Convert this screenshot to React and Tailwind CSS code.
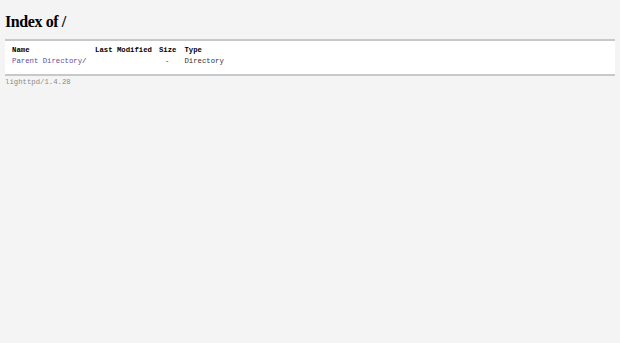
export default function App() {
  const mono = { fontFamily: '"Liberation Mono", "DejaVu Sans Mono", monospace' };
  return (
    <div className="min-h-[343px] w-full bg-[#f4f4f4] px-[5px] pt-[11px]">
      <h1 className="text-[16px] font-bold leading-[22px] tracking-[-0.4px] text-black [font-family:'Liberation_Serif',serif]">
        Index of /
      </h1>
      <div className="mt-[6px] border-t-2 border-b-2 border-[#c8c8c8] bg-white px-[6px] pt-[4px] pb-[2px] font-['Liberation_Mono',monospace] text-[7.3px] leading-[11px]">
        <table className="border-separate border-spacing-x-[1px]">
          <thead>
            <tr className="font-bold text-black">
              <td className="w-[82px]">Name</td>
              <td className="pr-[6px]">Last Modified</td>
              <td className="pr-[7px]">Size</td>
              <td>Type</td>
            </tr>
          </thead>
          <tbody>
            <tr className="text-[#333]">
              <td>
                <span className="text-[#5a4ea0]">Parent Directory</span>/
              </td>
              <td></td>
              <td className="pl-[6px]">-</td>
              <td>Directory</td>
            </tr>
          </tbody>
        </table>
        <div className="h-[5px]" />
      </div>
      <div className="mt-[1px] text-[7.3px] leading-[10px] text-[#8a8a8a]" style={mono}>
        lighttpd/1.4.28
      </div>
    </div>
  );
}
